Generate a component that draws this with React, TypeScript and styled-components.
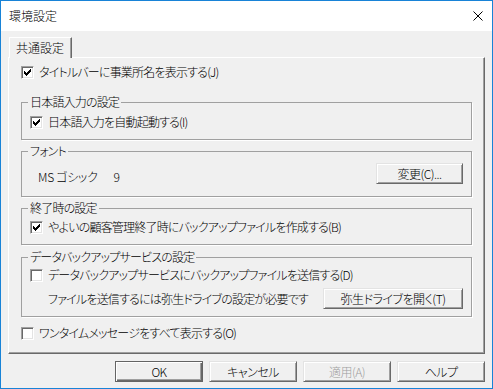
import styled, { createGlobalStyle } from 'styled-components';

const GlobalStyle = createGlobalStyle`
  html, body {
    margin: 0;
    padding: 0;
    background: #f0f0f0;
  }
  body {
    font-family: 'Noto Sans CJK JP', 'Noto Sans', sans-serif;
    font-size: 12px;
    font-weight: 300;
    color: #000;
    font-feature-settings: 'palt';
    letter-spacing: -0.8px;
  }
`;

const Window = styled.div`
  width: 493px;
  height: 389px;
  box-sizing: border-box;
  border: 1px solid #1883d7;
  display: flex;
  flex-direction: column;
  background: #f0f0f0;
`;

const TitleBar = styled.div`
  height: 30px;
  flex: none;
  background: #fff;
  display: flex;
  align-items: center;
  justify-content: space-between;
  padding: 0 9px 0 8px;
  line-height: 14px;
  letter-spacing: 0;
`;

const Body = styled.div`
  flex: 1;
  display: flex;
  flex-direction: column;
  padding: 6px 7px 6px 7px;
`;

const Tab = styled.div`
  position: relative;
  z-index: 1;
  align-self: flex-start;
  margin-left: 1px;
  margin-bottom: -1px;
  height: 21px;
  box-sizing: border-box;
  padding: 0 7px 0 6px;
  line-height: 19px;
  letter-spacing: 0;
  background: #f0f0f0;
  border-top: 1px solid #fff;
  border-left: 1px solid #fff;
  border-right: 1px solid #696969;
  box-shadow: inset -1px 0 0 #a0a0a0;
`;

const Panel = styled.div`
  height: 297px;
  box-sizing: border-box;
  border-top: 1px solid #fff;
  border-left: 1px solid #fff;
  border-right: 1px solid #696969;
  border-bottom: 1px solid #696969;
  box-shadow: inset -1px -1px 0 #a0a0a0;
  padding: 6px 12px 0 12px;
  display: flex;
  flex-direction: column;
`;

const CheckRow = styled.label<{ $top?: number }>`
  display: flex;
  align-items: center;
  gap: 5px;
  height: 16px;
  line-height: 14px;
  margin-top: ${(p) => p.$top ?? 0}px;
  white-space: nowrap;
`;

const Box = styled.span`
  width: 13px;
  height: 13px;
  flex: none;
  box-sizing: border-box;
  background: #fff;
  border: 1px solid;
  border-color: #a0a0a0 #fff #fff #a0a0a0;
  box-shadow: inset 1px 1px 0 #696969, inset -1px -1px 0 #e3e3e3;
  display: flex;
`;

const Group = styled.fieldset<{ $height: number; $top: number }>`
  margin: ${(p) => p.$top}px 0 0;
  padding: 0 8px;
  min-inline-size: 0;
  height: ${(p) => p.$height}px;
  box-sizing: border-box;
  border: 1px solid #a0a0a0;
  box-shadow: 1px 1px 0 #fff;
  display: flex;
  flex-direction: column;
`;

const Legend = styled.legend`
  margin-left: -2px;
  padding: 0 2px;
  line-height: 14px;
  font-size: 12px;
  white-space: nowrap;
`;

const FontRow = styled.div`
  display: flex;
  justify-content: space-between;
  align-items: flex-start;
  margin-top: 5px;
`;

const FontName = styled.div`
  margin: 7px 0 0 8px;
  line-height: 14px;
  display: flex;
  gap: 16px;
  white-space: pre;
  letter-spacing: -0.3px;
`;

const DriveRow = styled.div`
  display: flex;
  justify-content: space-between;
  align-items: center;
  margin-top: 5px;
  padding-left: 18px;
  line-height: 14px;
  white-space: nowrap;
`;

const Button = styled.button<{ $width: number; $primary?: boolean }>`
  width: ${(p) => p.$width}px;
  height: 21px;
  flex: none;
  box-sizing: border-box;
  padding: 0;
  font: inherit;
  font-size: 12px;
  line-height: 14px;
  letter-spacing: -0.5px;
  white-space: nowrap;
  color: #000;
  background: #f0f0f0;
  border: 1px solid;
  border-color: ${(p) => (p.$primary ? '#646464' : '#e3e3e3 #696969 #696969 #e3e3e3')};
  box-shadow: ${(p) =>
    p.$primary
      ? 'inset 1px 1px 0 #fff, inset -1px -1px 0 #696969, inset -2px -2px 0 #a0a0a0'
      : 'inset 1px 1px 0 #fff, inset -1px -1px 0 #a0a0a0'};
  &:disabled {
    color: #a0a0a0;
  }
`;

const ButtonBar = styled.div`
  display: flex;
  justify-content: flex-end;
  gap: 6px;
  margin-top: 7px;
`;

const checkPixels = [
  [8, 2, 1], [7, 3, 2], [2, 4, 1], [6, 4, 3],
  [2, 5, 2], [5, 5, 3], [2, 6, 5], [3, 7, 3], [4, 8, 1],
];

const CheckBox = ({ checked }: { checked?: boolean }) => (
  <Box>
    {checked && (
      <svg width="11" height="11" viewBox="0 0 11 11" shapeRendering="crispEdges">
        {checkPixels.map(([x, y, w], i) => (
          <rect key={i} x={x} y={y} width={w} height={1} fill="#000" />
        ))}
      </svg>
    )}
  </Box>
);

const CloseIcon = () => (
  <svg width="10" height="10" viewBox="0 0 10 10">
    <path d="M0.5 0.5 L9.5 9.5 M9.5 0.5 L0.5 9.5" stroke="#000" strokeWidth="1" />
  </svg>
);

const App = () => (
  <>
    <GlobalStyle />
    <Window>
      <TitleBar>
        <span>環境設定</span>
        <CloseIcon />
      </TitleBar>
      <Body>
        <Tab>共通設定</Tab>
        <Panel>
          <CheckRow>
            <CheckBox checked />
            タイトルバーに事業所名を表示する(J)
          </CheckRow>

          <Group $top={15} $height={45}>
            <Legend>日本語入力の設定</Legend>
            <CheckRow $top={5}>
              <CheckBox checked />
              日本語入力を自動起動する(I)
            </CheckRow>
          </Group>

          <Group $top={4} $height={53}>
            <Legend>フォント</Legend>
            <FontRow>
              <FontName>
                <span>MS ゴシック</span>
                <span>9</span>
              </FontName>
              <Button $width={87}>変更(C)...</Button>
            </FontRow>
          </Group>

          <Group $top={4} $height={44}>
            <Legend>終了時の設定</Legend>
            <CheckRow $top={4}>
              <CheckBox checked />
              やよいの顧客管理終了時にバックアップファイルを作成する(B)
            </CheckRow>
          </Group>

          <Group $top={5} $height={67}>
            <Legend>データバックアップサービスの設定</Legend>
            <CheckRow $top={3}>
              <CheckBox />
              データバックアップサービスにバックアップファイルを送信する(D)
            </CheckRow>
            <DriveRow>
              <span>ファイルを送信するには弥生ドライブの設定が必要です</span>
              <Button $width={140}>弥生ドライブを開く(T)</Button>
            </DriveRow>
          </Group>

          <CheckRow $top={8}>
            <CheckBox />
            ワンタイムメッセージをすべて表示する(O)
          </CheckRow>
        </Panel>
        <ButtonBar>
          <Button $width={88} $primary>OK</Button>
          <Button $width={88}>キャンセル</Button>
          <Button $width={88} disabled>適用(A)</Button>
          <Button $width={88}>ヘルプ</Button>
        </ButtonBar>
      </Body>
    </Window>
  </>
);

export default App;
